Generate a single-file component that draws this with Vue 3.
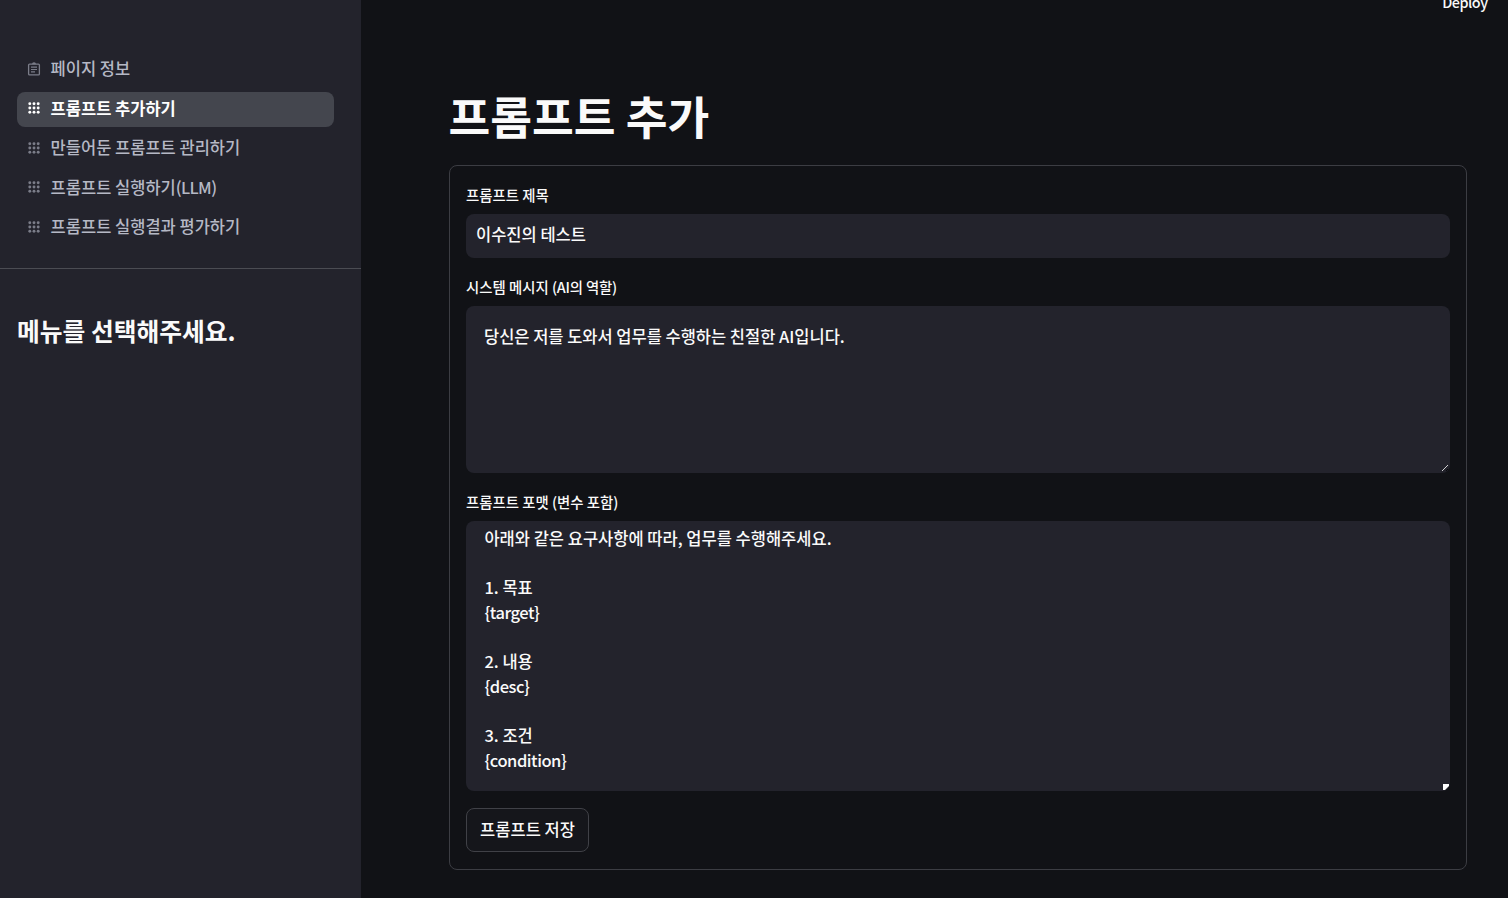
<template>
  <div class="app">
    <aside class="sidebar">
      <nav class="nav">
        <a
          v-for="(item, index) in pages"
          :key="item.label"
          class="nav-item"
          :class="{ active: index === current }"
          @click="current = index"
        >
          <svg v-if="item.icon === 'clipboard'" class="icon" viewBox="0 0 14 14">
            <rect x="1.6" y="2.1" width="10.8" height="10.8" rx="1" fill="none" stroke="currentColor" stroke-width="1.3" />
            <path d="M5 2.2a2 1.9 0 0 1 4 0z" fill="currentColor" />
            <path d="M4 5.1h6M4 7.5h6M4 9.9h4" stroke="currentColor" stroke-width="1.2" />
          </svg>
          <svg v-else class="icon" viewBox="0 0 14 14">
            <circle v-for="dot in dots" :key="dot.id" :cx="dot.x" :cy="dot.y" r="1.45" fill="currentColor" />
          </svg>
          <span class="text">{{ item.label }}<span v-if="item.suffix" class="latin">{{ item.suffix }}</span></span>
        </a>
      </nav>
      <h2>메뉴를 선택해주세요.</h2>
    </aside>

    <main class="main">
      <header class="toolbar"><span class="latin">Deploy</span></header>
      <h1>프롬프트 추가</h1>
      <form class="form" @submit.prevent>
        <label for="title">프롬프트 제목</label>
        <input id="title" v-model="title" class="field" type="text" />

        <label for="system">시스템 메시지 <span class="tight">(AI의 역할)</span></label>
        <div class="area">
          <textarea id="system" v-model="system" class="field system" />
          <svg class="grip" viewBox="0 0 8 8">
            <path d="M1 7L7 1" stroke="#d0d0d2" stroke-width="1" />
            <path d="M5 7L7 5" stroke="#09090b" stroke-width="1" />
          </svg>
        </div>

        <label>프롬프트 포맷 (변수 포함)</label>
        <div class="area">
          <div class="field format" contenteditable="true" role="textbox" spellcheck="false">
            <div
              v-for="(line, index) in format"
              :key="index"
              class="line"
              :class="{ latin: line.startsWith('{') }"
            >{{ line }}</div>
          </div>
          <svg class="grip corner" viewBox="0 0 8 8">
            <path d="M1 1h6v2L3 7H1z" fill="#fff" />
          </svg>
        </div>

        <button type="submit">프롬프트 저장</button>
      </form>
    </main>
  </div>
</template>

<script setup>
import { ref } from 'vue'

const pages = [
  { label: '페이지 정보', icon: 'clipboard' },
  { label: '프롬프트 추가하기', icon: 'apps' },
  { label: '만들어둔 프롬프트 관리하기', icon: 'apps' },
  { label: '프롬프트 실행하기', suffix: '(LLM)', icon: 'apps' },
  { label: '프롬프트 실행결과 평가하기', icon: 'apps' }
]

const dots = Array.from({ length: 9 }, (_, i) => ({
  id: i,
  x: 2.8 + (i % 3) * 4.2,
  y: 2.8 + Math.floor(i / 3) * 4.2
}))

const current = ref(1)
const title = ref('이수진의 테스트')
const system = ref('당신은 저를 도와서 업무를 수행하는 친절한 AI입니다.')
const format = [
  '아래와 같은 요구사항에 따라, 업무를 수행해주세요.',
  '',
  '1. 목표',
  '{target}',
  '',
  '2. 내용',
  '{desc}',
  '',
  '3. 조건',
  '{condition}'
]
</script>

<style>
body {
  margin: 0;
  background: #111216;
}
</style>

<style scoped>
.app {
  display: flex;
  height: 898px;
  overflow: hidden;
  background: #111216;
  color: #fafafa;
  font-family: "Noto Sans CJK KR", sans-serif;
  font-size: 16.5px;
  font-weight: 500;
}

.latin {
  letter-spacing: -0.48px;
}

.tight {
  letter-spacing: -0.2px;
}

.sidebar {
  flex: 0 0 361px;
  box-sizing: border-box;
  padding-top: 52px;
  background: #23232c;
}

.nav {
  display: flex;
  flex-direction: column;
  gap: 4.6px;
  padding: 0 27px 23px 17px;
  border-bottom: 1px solid #4b4c53;
}

.nav-item {
  display: flex;
  align-items: center;
  gap: 9.6px;
  height: 35px;
  padding-left: 10px;
  border-radius: 8px;
  color: #b5b8c5;
  line-height: 33px;
  cursor: pointer;
}

.text {
  height: 35px;
}

.nav-item .latin {
  letter-spacing: -0.65px;
}

.nav-item.active {
  background: #44464e;
  color: #fff;
  font-weight: 700;
}

.icon {
  width: 14px;
  height: 14px;
  margin-bottom: 2px;
  color: #7b7d89;
}

.active .icon {
  color: #fff;
}

h2 {
  margin: 44px 0 0 17px;
  font-size: 24.75px;
  line-height: 35px;
  font-weight: 700;
}

.main {
  flex: 1;
  padding: 0 41px 0 88px;
}

.toolbar {
  display: flex;
  justify-content: flex-end;
  height: 80px;
  margin-right: -20.5px;
  font-size: 14.4px;
  line-height: 20px;
}

.toolbar span {
  margin-top: -8.5px;
}

h1 {
  margin: 0 0 15px -0.5px;
  font-size: 45.4px;
  line-height: 70px;
  font-weight: 700;
}

.form {
  display: flex;
  flex-direction: column;
  align-items: stretch;
  box-sizing: border-box;
  height: 705px;
  padding: 16px;
  border: 1px solid #3c3d43;
  border-radius: 8px;
}

label {
  height: 32px;
  font-size: 14.4px;
  line-height: 25px;
}

.field {
  display: block;
  box-sizing: border-box;
  width: 100%;
  margin: 0;
  border: 0;
  border-radius: 8px;
  outline: none;
  background: #23232c;
  color: #fafafa;
  font: inherit;
}

input.field {
  height: 44px;
  margin-bottom: 16px;
  padding: 0 10px 4px;
}

.area {
  position: relative;
  margin-bottom: 16px;
}

textarea.field {
  padding: 18px 18px 0;
  line-height: 24.6px;
  resize: none;
  overflow: hidden;
}

.system {
  height: 167px;
  letter-spacing: -0.02px;
}

.format {
  height: 270px;
  padding: 5px 18.4px 0;
  overflow: hidden;
}

.line {
  height: 24.65px;
  line-height: 24.65px;
}

.grip {
  position: absolute;
  right: 1px;
  bottom: 1px;
  width: 8px;
  height: 8px;
}

.corner {
  right: 0;
  bottom: 0;
}

button {
  align-self: flex-start;
  width: 123px;
  height: 44px;
  margin-top: 1px;
  padding: 0 0 2px;
  border: 1px solid #404147;
  border-radius: 8px;
  background: #15161b;
  color: #fafafa;
  font: inherit;
}
</style>
